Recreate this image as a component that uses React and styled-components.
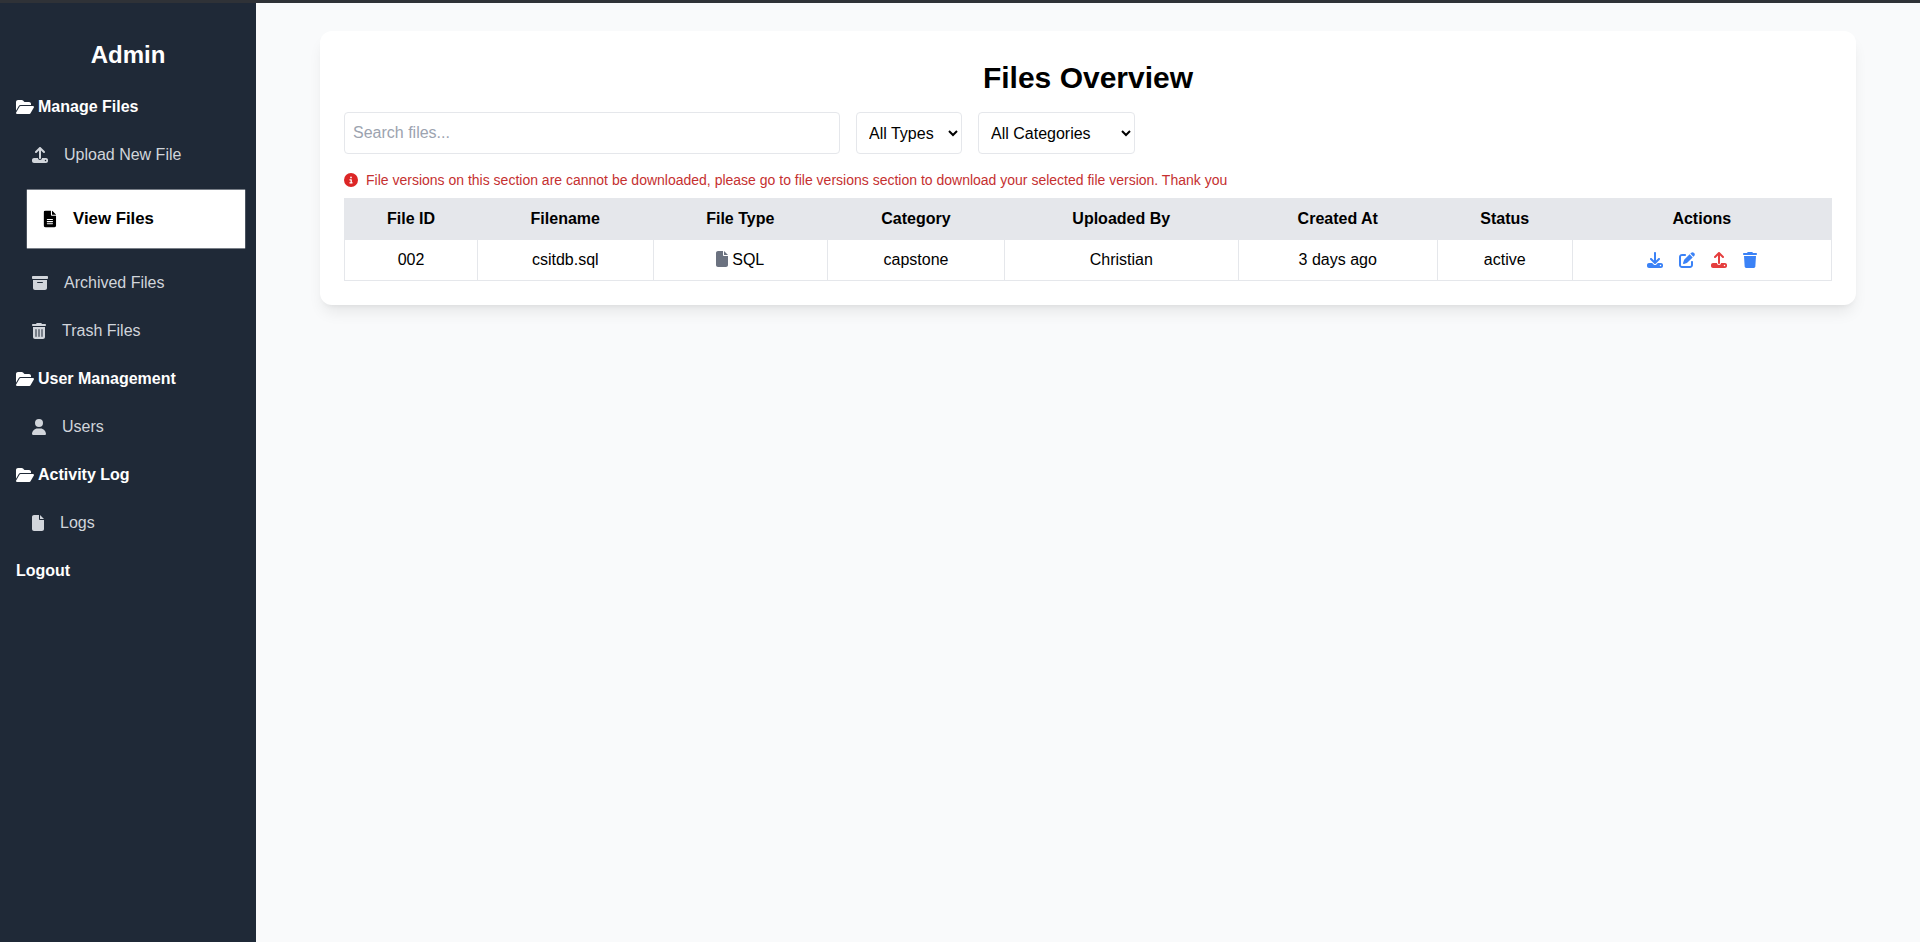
import React from "react";
import styled, { createGlobalStyle } from "styled-components";
import {
  FaFolderOpen, FaUpload, FaFileLines, FaBoxArchive, FaTrashCan, FaUser, FaFile,
  FaCircleInfo, FaDownload, FaPenToSquare, FaTrash,
} from "react-icons/fa6";

const Global = createGlobalStyle`
  html, body { margin: 0; padding: 0; height: 100%; }
  body { font-family: "Liberation Sans", Arial, sans-serif; font-size: 16px; color: #000; background: #f9fafb; }
  * { box-sizing: border-box; }
`;

const Page = styled.div`
  height: 100vh;
  display: flex;
  flex-direction: column;
  overflow: hidden;
`;
const TopStrip = styled.div`
  height: 3px;
  flex: none;
  background: #2f3237;
`;
const Body = styled.div`
  flex: 1;
  display: flex;
  min-height: 0;
`;
const Sidebar = styled.aside`
  width: 256px;
  flex: none;
  background: #1f2937;
  padding: 0 16px;
`;
const Brand = styled.h2`
  margin: 0;
  padding-top: 34px;
  height: 80px;
  font-size: 24px;
  line-height: 36px;
  font-weight: 700;
  color: #fff;
  text-align: center;
`;
const SectionHead = styled.div`
  height: 48px;
  display: flex;
  align-items: center;
  font-weight: 700;
  color: #fff;
  svg { width: 18px; height: 16px; margin-right: 4px; flex: none; }
`;
const NavItem = styled.div`
  display: flex;
  align-items: center;
  margin-left: 16px;
  height: ${(p) => (p.$active ? "56px" : "48px")};
  margin-top: ${(p) => (p.$active ? "12px" : "0")};
  margin-bottom: ${(p) => (p.$active ? "12px" : "0")};
  padding: ${(p) => (p.$active ? "0 16px" : "0")};
  background: ${(p) => (p.$active ? "#fff" : "transparent")};
  color: ${(p) => (p.$active ? "#000" : "#d1d5db")};
  font-weight: ${(p) => (p.$active ? 700 : 400)};
  transform: ${(p) => (p.$active ? "scale(1.05)" : "none")};
  svg { margin-right: 16px; flex: none; height: 16px; width: ${(p) => p.$iconW}px; }
`;
const LogoutLink = styled.div`
  height: 48px;
  display: flex;
  align-items: center;
  font-weight: 700;
  color: #fff;
`;
const Main = styled.main`
  flex: 1;
  min-width: 0;
  padding: 28px 64px;
  background: #f9fafb;
`;
const Card = styled.section`
  background: #fff;
  border-radius: 12px;
  padding: 24px;
  box-shadow: 0 10px 15px -3px rgba(0, 0, 0, 0.08), 0 4px 6px -4px rgba(0, 0, 0, 0.08);
`;
const Title = styled.h1`
  margin: 5px 0 16px;
  font-size: 30px;
  line-height: 36px;
  font-weight: 700;
  text-align: center;
`;
const Filters = styled.div`
  display: flex;
  gap: 16px;
  align-items: stretch;
  margin-bottom: 16px;
`;
const Search = styled.input`
  width: 496px;
  height: 42px;
  padding: 8px;
  border: 1px solid #e5e7eb;
  border-radius: 4px;
  font: inherit;
  outline: none;
  &::placeholder { color: #9ca3af; opacity: 1; }
`;
const Select = styled.select`
  width: ${(p) => p.$w}px;
  height: 42px;
  padding: 8px;
  border: 1px solid #e5e7eb;
  border-radius: 4px;
  background: #fff;
  color: #000;
  font: inherit;
`;
const Notice = styled.p`
  margin: 0 0 8px;
  display: flex;
  align-items: center;
  gap: 8px;
  font-size: 14px;
  line-height: 20px;
  color: #c53030;
  svg { color: #dc2626; width: 14px; height: 14px; flex: none; }
`;
const Table = styled.table`
  width: 1487px;
  table-layout: fixed;
  border-collapse: collapse;
`;
const Th = styled.th`
  background: #e5e7eb;
  border: 1px solid #e5e7eb;
  padding: 8px;
  line-height: 24px;
  font-size: 16px;
  font-weight: 700;
  text-align: center;
`;
const Td = styled.td`
  border: 1px solid #e5e7eb;
  padding: 8px;
  line-height: 24px;
  text-align: center;
`;
const TypeIcon = styled(FaFile)`
  width: 12px;
  height: 16px;
  color: #6b7280;
  margin-right: 4px;
  vertical-align: -2px;
`;
const Actions = styled.div`
  display: flex;
  justify-content: center;
  align-items: center;
  gap: 16px;
`;
const ActionBtn = styled.span`
  display: inline-flex;
  color: ${(p) => (p.$danger ? "#e53e3e" : "#3b82f6")};
  svg { width: ${(p) => p.$w || 16}px; height: 16px; }
`;

const columns = [
  ["File ID", 133], ["Filename", 175.5], ["File Type", 174.5], ["Category", 177],
  ["Uploaded By", 233.5], ["Created At", 199.5], ["Status", 134.5], ["Actions", 259.5],
];

export default function App() {
  return (
    <>
      <Global />
      <Page>
        <TopStrip />
        <Body>
          <Sidebar>
            <Brand>Admin</Brand>
            <SectionHead><FaFolderOpen />Manage Files</SectionHead>
            <NavItem $iconW={16}><FaUpload />Upload New File</NavItem>
            <NavItem $active $iconW={12}><FaFileLines />View Files</NavItem>
            <NavItem $iconW={16}><FaBoxArchive />Archived Files</NavItem>
            <NavItem $iconW={14}><FaTrashCan />Trash Files</NavItem>
            <SectionHead><FaFolderOpen />User Management</SectionHead>
            <NavItem $iconW={14}><FaUser />Users</NavItem>
            <SectionHead><FaFolderOpen />Activity Log</SectionHead>
            <NavItem $iconW={12}><FaFile />Logs</NavItem>
            <LogoutLink>Logout</LogoutLink>
          </Sidebar>
          <Main>
            <Card>
              <Title>Files Overview</Title>
              <Filters>
                <Search placeholder="Search files..." />
                <Select $w={106} defaultValue="all"><option value="all">All Types</option></Select>
                <Select $w={157} defaultValue="all"><option value="all">All Categories</option></Select>
              </Filters>
              <Notice><FaCircleInfo />File versions on this section are cannot be downloaded, please go to file versions section to download your selected file version. Thank you</Notice>
              <Table>
                <colgroup>
                  {columns.map(([name, w]) => <col key={name} width={w} />)}
                </colgroup>
                <thead>
                  <tr>{columns.map(([name]) => <Th key={name}>{name}</Th>)}</tr>
                </thead>
                <tbody>
                  <tr>
                    <Td>002</Td>
                    <Td>csitdb.sql</Td>
                    <Td><TypeIcon />SQL</Td>
                    <Td>capstone</Td>
                    <Td>Christian</Td>
                    <Td>3 days ago</Td>
                    <Td>active</Td>
                    <Td>
                      <Actions>
                        <ActionBtn><FaDownload /></ActionBtn>
                        <ActionBtn><FaPenToSquare /></ActionBtn>
                        <ActionBtn $danger><FaUpload /></ActionBtn>
                        <ActionBtn $w={14}><FaTrash /></ActionBtn>
                      </Actions>
                    </Td>
                  </tr>
                </tbody>
              </Table>
            </Card>
          </Main>
        </Body>
      </Page>
    </>
  );
}
